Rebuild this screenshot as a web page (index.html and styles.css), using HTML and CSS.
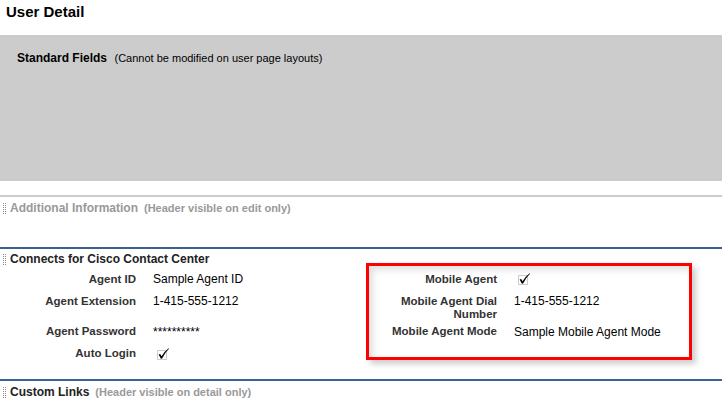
FILE: index.html
```html
<!DOCTYPE html>
<html>
<head>
<meta charset="utf-8">
<link rel="stylesheet" href="styles.css">
</head>
<body>
<div class="page">
  <h1 class="title">User Detail</h1>
  <div class="std-box">
    <span class="std-title">Standard Fields</span>
    <span class="std-note">(Cannot be modified on user page layouts)</span>
  </div>

  <div class="section section-gray">
    <div class="sec-head"><span class="handle"></span><span class="head-muted">Additional Information</span><span class="note">(Header visible on edit only)</span></div>
  </div>

  <div class="section section-blue">
    <div class="sec-head sec-head-tight"><span class="handle"></span><span class="head-dark">Connects for Cisco Contact Center</span></div>
    <div class="fields">
      <div class="lbl r1">Agent ID</div>
      <div class="val r1">Sample Agent ID</div>
      <div class="lbl r1">Mobile Agent</div>
      <div class="val r1"><span class="check"><svg width="14" height="13" viewBox="0 0 14 13"><rect x="1.5" y="3.5" width="9" height="9" fill="none" stroke="#999" stroke-width="1" stroke-dasharray="1 1"/><path d="M2.6 7.4 L4.2 6.9 L5.6 9.2 Q8.6 4.2 12.6 1.2 L13 1.8 Q9.2 5.4 6.1 11.6 L4.9 11.8 Z" fill="#000"/></svg></span></div>

      <div class="lbl r2">Agent Extension</div>
      <div class="val r2">1-415-555-1212</div>
      <div class="lbl r2">Mobile Agent Dial<br>Number</div>
      <div class="val r2">1-415-555-1212</div>

      <div class="lbl r3">Agent Password</div>
      <div class="val r3 stars">**********</div>
      <div class="lbl r3">Mobile Agent Mode</div>
      <div class="val r3">Sample Mobile Agent Mode</div>

      <div class="lbl r4">Auto Login</div>
      <div class="val r4"><span class="check"><svg width="14" height="13" viewBox="0 0 14 13"><rect x="1.5" y="3.5" width="9" height="9" fill="none" stroke="#999" stroke-width="1" stroke-dasharray="1 1"/><path d="M2.6 7.4 L4.2 6.9 L5.6 9.2 Q8.6 4.2 12.6 1.2 L13 1.8 Q9.2 5.4 6.1 11.6 L4.9 11.8 Z" fill="#000"/></svg></span></div>
      <div class="lbl r4"></div>
      <div class="val r4"></div>
    </div>
  </div>

  <div class="section section-blue section-last">
    <div class="sec-head"><span class="handle"></span><span class="head-dark">Custom Links</span><span class="note">(Header visible on detail only)</span></div>
  </div>

  <div class="highlight"></div>
</div>
</body>
</html>
```

FILE: styles.css
```css
html, body {
  margin: 0;
  padding: 0;
  background: #fff;
}
body {
  font-family: "Liberation Sans", Arial, sans-serif;
  color: #000;
}
.page {
  position: relative;
  width: 722px;
  height: 418px;
  overflow: hidden;
}
.title {
  margin: 0;
  padding: 3px 0 0 6px;
  height: 32px;
  font-size: 15px;
  line-height: 17px;
  font-weight: bold;
  color: #000;
}
.std-box {
  background: #cccccc;
  height: 146px;
  box-sizing: border-box;
  padding: 15px 0 0 17px;
  line-height: 14px;
}
.std-title {
  font-size: 12px;
  font-weight: bold;
  color: #000;
}
.std-note {
  font-size: 11px;
  color: #000;
  margin-left: 3px;
}
.section {
  margin-top: 14px;
}
.section-gray {
  border-top: 2px solid #cccccc;
  height: 50px;
  margin-top: 14px;
}
.section-blue {
  border-top: 2px solid #3b628d;
  margin-top: 0;
}
.section-last {
  margin-top: 14px;
}
.sec-head {
  display: flex;
  align-items: center;
  padding: 4px 0 4px 3px;
  line-height: 14px;
  height: 14px;
}
.sec-head-tight {
  padding-top: 3px;
  padding-bottom: 3px;
}
.handle {
  display: inline-block;
  width: 1px;
  height: 11px;
  border-left: 1px dotted #888;
  border-right: 1px dotted #888;
  margin-right: 4px;
}
.head-muted {
  font-size: 12px;
  font-weight: bold;
  color: #999;
}
.head-dark {
  font-size: 12px;
  font-weight: bold;
  color: #222;
}
.note {
  font-size: 11px;
  font-weight: bold;
  color: #999;
  margin-left: 6px;
}
.fields {
  display: grid;
  grid-template-columns: 145px 216px 145px 1fr;
  grid-template-rows: 21px 31px 22px 22px;
}
.lbl {
  text-align: right;
  padding: 4px 9px 0 0;
  font-size: 11.5px;
  line-height: 13px;
  font-weight: bold;
  color: #333;
}
.r2.lbl {
  padding-top: 5px;
}
.val {
  padding: 3px 0 0 8px;
  font-size: 12px;
  line-height: 14px;
  color: #000;
}
.r2.val {
  padding-top: 4px;
}
.r3.val, .r4.val {
  padding-top: 4px;
}
.stars {
  font-size: 12px;
}
.check {
  display: inline-block;
  margin-left: 3px;
  line-height: 0;
}
.highlight {
  position: absolute;
  left: 366px;
  top: 263px;
  width: 320px;
  height: 91px;
  border: 3px solid #ff0000;
  box-shadow: 4px 4px 6px rgba(0,0,0,0.2), inset 4px 4px 6px rgba(0,0,0,0.12);
  pointer-events: none;
}
```
